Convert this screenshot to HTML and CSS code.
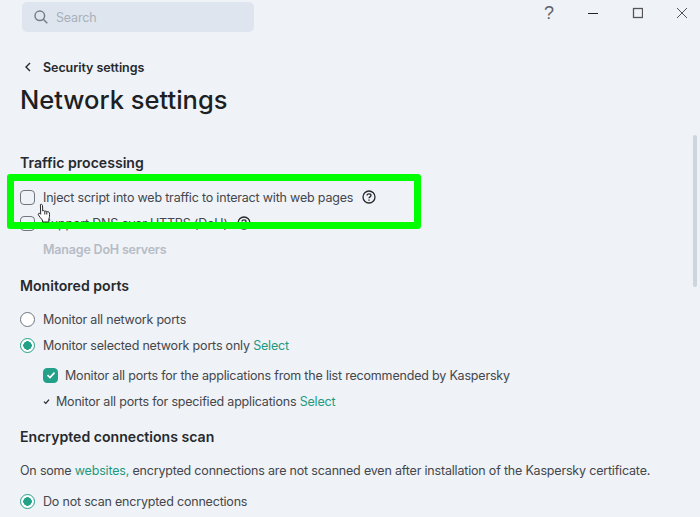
FILE: index.html
```html
<!DOCTYPE html>
<html lang="en">
<head>
    <meta charset="UTF-8">
    <title>Network settings</title>
    <link rel="stylesheet" href="styles.css">
</head>
<body>

<div class="window">
    <!-- Top bar -->
    <div class="topbar">
        <div class="search">
            <svg class="search-icon" width="16" height="16" viewBox="0 0 16 16"><circle cx="6.8" cy="6.8" r="4.8"/><path d="M10.300 10.300L14.300 14.300"/></svg>
            <span>Search</span>
        </div>
        <div class="window-btns">
            <span class="btn-help">?</span>
            <svg width="12" height="12" viewBox="0 0 12 12"><path class="btn-min" d="M2 6.500H12"/></svg>
            <svg width="12" height="12" viewBox="0 0 12 12"><rect class="btn-stroke" x="2.500" y="1.500" width="9" height="9"/></svg>
            <svg width="12" height="12" viewBox="0 0 12 12"><path class="btn-thin" d="M1 1L11 11M11 1L1 11"/></svg>
        </div>
    </div>

    <div class="content">
        <div class="back">
            <svg width="8" height="12" viewBox="0 0 8 12"><path d="M6 2L2 6L6 10"/></svg>
            <span>Security settings</span>
        </div>
        <h1>Network settings</h1>

        <!-- Traffic processing -->
        <h2 class="first">Traffic processing</h2>
        <div class="row">
            <span class="check"></span>
            <span>Inject script into web traffic to interact with web pages</span>
            <svg class="help" width="14" height="14" viewBox="0 0 14 14"><circle cx="7" cy="7" r="6"/><path d="M5 5.600C5 3.200 9 3.300 9 5.500C9 6.900 7 6.800 7 8.300"/><path d="M7 9.500V10.700"/></svg>
        </div>
        <div class="row">
            <span class="check"></span>
            <span>Support DNS over HTTPS (DoH)</span>
            <svg class="help" width="14" height="14" viewBox="0 0 14 14"><circle cx="7" cy="7" r="6"/><path d="M5 5.600C5 3.200 9 3.300 9 5.500C9 6.900 7 6.800 7 8.300"/><path d="M7 9.500V10.700"/></svg>
        </div>
        <div class="row indent disabled">Manage DoH servers</div>

        <!-- Monitored ports -->
        <h2 class="ports">Monitored ports</h2>
        <div class="row"><span class="radio"></span><span>Monitor all network ports</span></div>
        <div class="row"><span class="radio on"></span><span>Monitor selected network ports only <a>Select</a></span></div>
        <div class="row sub-check">
            <span class="check on">
                <svg width="10" height="10" viewBox="0 0 10 10"><path d="M1.500 5.200L4 7.600L8.500 2.600"/></svg>
            </span>
            <span>Monitor all ports for the applications from the list recommended by Kaspersky</span>
        </div>
        <div class="row sub-tick">
            <svg width="7" height="7" viewBox="0 0 7 7"><path d="M1 3.600L2.800 5.400L6 1.600"/></svg>
            <span>Monitor all ports for specified applications <a>Select</a></span>
        </div>

        <!-- Encrypted connections -->
        <h2>Encrypted connections scan</h2>
        <p class="note">On some <a>websites,</a> encrypted connections are not scanned even after installation of the Kaspersky certificate.</p>
        <div class="row"><span class="radio on"></span><span>Do not scan encrypted connections</span></div>
    </div>

    <div class="scrollbar"></div>

    <!-- Green highlight and mouse pointer on top of the screenshot -->
    <div class="highlight"></div>
    <svg class="pointer" width="15" height="21" viewBox="0 0 15 21">
        <path d="M3.400 1.600C4.400 1 5.400 1.500 5.500 2.600L5.700 8C6.600 7.400 7.400 7.600 7.800 8.300C8.600 7.800 9.400 8 9.800 8.800C10.800 8.300 12.200 8.800 12.400 10C12.700 12 12.600 14.500 11.800 16.200L11.800 19H5.600L5.400 17C4 15.500 2.600 13.800 1.400 11.900C0.800 10.900 2 9.800 3 10.600L3.700 11.300Z"/>
        <path d="M7.800 8.300V11.500M9.800 8.800V11.500"/>
    </svg>
</div>

</body>
</html>
```

FILE: styles.css
```css
body {
    margin: 0;
    background-color: #eff2f7;
    color: #44474b;
    font-family: 'Inter', sans-serif;
    font-size: 12.5px;
    letter-spacing: -0.19px;
}

.window {
    position: relative;
    width: 700px;
    height: 517px;
    overflow: hidden;
    background-color: #eff2f7;
}

a {
    color: #1f9a80;
}

svg {
    display: block;
    flex: none;
    fill: none;
}

.topbar {
    display: flex;
    justify-content: space-between;
    align-items: flex-start;
    height: 32px;
    padding-left: 22px;
}

.search {
    display: flex;
    align-items: center;
    gap: 7px;
    box-sizing: border-box;
    width: 232px;
    height: 30px;
    margin-top: 2px;
    padding-left: 11px;
    background-color: #dee5ee;
    border-radius: 5px;
    color: #a7b0bb;
}

.search-icon circle,
.search-icon path {
    stroke: #767d87;
    stroke-width: 1.5;
}

.window-btns {
    display: flex;
    align-items: center;
    gap: 33px;
    height: 26px;
    padding-right: 12px;
}

.btn-help {
    margin-right: -1px;
    color: #5f6266;
    font-family: 'Liberation Sans', sans-serif;
    font-size: 18px;
    letter-spacing: 0;
}

.btn-min {
    stroke: #222;
    stroke-width: 1;
}

.btn-stroke {
    stroke: #555;
    stroke-width: 1.3;
}

.btn-thin {
    stroke: #555;
    stroke-width: 1;
}

.content {
    padding-left: 20px;
}

.back {
    display: flex;
    align-items: center;
    gap: 11px;
    height: 16px;
    margin-top: 27px;
    padding-left: 4px;
    color: #26292d;
    font-weight: 600;
    letter-spacing: -0.06px;
}

.back path {
    stroke: #26292d;
    stroke-width: 1.4;
}

h1 {
    margin: 8px 0 0 0;
    color: #1c1f23;
    font-size: 25.5px;
    font-weight: 500;
    letter-spacing: 0;
    line-height: 34px;
}

h2 {
    margin: 18px 0 0 0;
    color: #26292d;
    font-size: 14.1px;
    font-weight: 600;
    letter-spacing: 0;
    line-height: 18px;
}

h2.first {
    margin-top: 37px;
}

h2.ports {
    margin-top: 15px;
}

.row {
    display: flex;
    align-items: center;
    gap: 8px;
    height: 26px;
}

h2 + .row {
    margin-top: 12px;
}

h2.ports + .row {
    margin-top: 11px;
}

.check {
    display: flex;
    align-items: center;
    justify-content: center;
    box-sizing: border-box;
    width: 15px;
    height: 15px;
    border: 1.5px solid #6f7680;
    border-radius: 4px;
}

.check.on {
    background-color: #23a088;
    border-color: #23a088;
}

.check.on path {
    stroke: #fff;
    stroke-width: 1.6;
}

.radio {
    box-sizing: border-box;
    width: 15px;
    height: 15px;
    border: 1.5px solid #6f7680;
    border-radius: 50%;
    background-color: #fff;
}

.radio.on {
    border-color: #23a088;
    background: radial-gradient(circle, #23a088 0, #23a088 4px, #fff 4.5px);
}

.help {
    margin-left: 1px;
}

.help circle,
.help path {
    stroke: #26292d;
    stroke-width: 1.3;
}

.indent {
    padding-left: 23px;
}

.disabled {
    color: #b6bcc5;
    font-weight: 600;
}

.sub-check {
    gap: 7px;
    height: 34px;
    padding-left: 23px;
}

.sub-tick {
    gap: 6px;
    height: 18px;
    padding-left: 23px;
}

.sub-tick path {
    stroke: #26292d;
    stroke-width: 1.3;
}

.note {
    margin: 17px 0 0 0;
    line-height: 16px;
}

.note + .row {
    margin-top: 9px;
}

.scrollbar {
    position: absolute;
    top: 135px;
    right: 3px;
    width: 4px;
    height: 152px;
    background-color: #cdd5dd;
    border-radius: 2px;
}

.highlight {
    position: absolute;
    top: 174px;
    left: 7px;
    box-sizing: border-box;
    width: 414px;
    height: 55px;
    border: 7px solid #00ff00;
    border-radius: 3px;
}

.pointer {
    position: absolute;
    top: 203px;
    left: 37px;
}

.pointer path {
    fill: #fff;
    stroke: #2a2a2a;
    stroke-width: 1;
}
```
